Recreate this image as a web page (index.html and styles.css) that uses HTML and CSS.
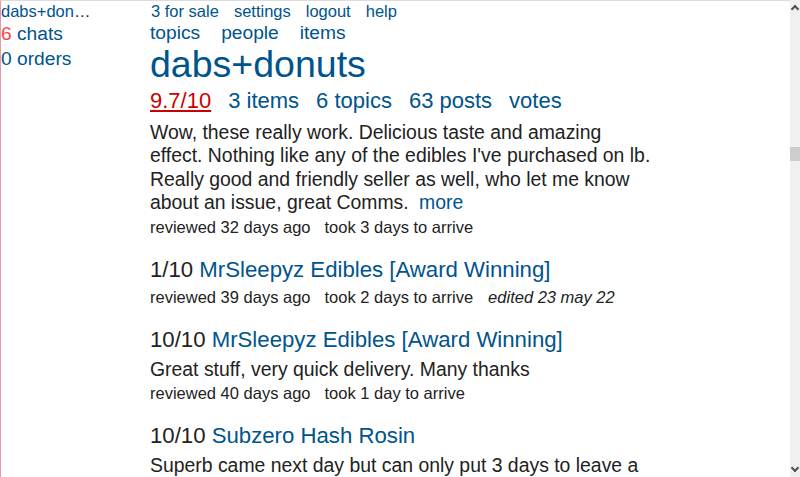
FILE: index.html
```html
<!DOCTYPE html>
<html>
<head>
<meta charset="utf-8">
<link rel="stylesheet" href="styles.css">
</head>
<body>
<div class="page">
  <aside class="side">
    <div class="side-name"><a href="#">dabs+donuts</a></div>
    <div class="side-row"><span class="alert">6</span> <a href="#">chats</a></div>
    <div class="side-row"><a href="#">0 orders</a></div>
  </aside>
  <main class="main">
    <nav class="topnav">
      <a href="#">3 for sale</a>
      <a href="#">settings</a>
      <a href="#">logout</a>
      <a href="#">help</a>
    </nav>
    <nav class="subnav">
      <a href="#">topics</a>
      <a href="#">people</a>
      <a href="#">items</a>
    </nav>
    <h1 class="title">dabs+donuts</h1>
    <div class="stats">
      <a href="#" class="rating">9.7/10</a>
      <a href="#">3 items</a>
      <a href="#">6 topics</a>
      <a href="#">63 posts</a>
      <a href="#">votes</a>
    </div>
    <section class="review first">
      <p class="body">Wow, these really work. Delicious taste and amazing effect. Nothing like any of the edibles I've purchased on lb. Really good and friendly seller as well, who let me know about an issue, great Comms. <a href="#" class="more">more</a></p>
      <div class="meta"><span>reviewed 32 days ago</span><span>took 3 days to arrive</span></div>
    </section>
    <section class="review">
      <div class="rtitle">1/10 <a href="#">MrSleepyz Edibles [Award Winning]</a></div>
      <div class="meta"><span>reviewed 39 days ago</span><span>took 2 days to arrive</span><em>edited 23 may 22</em></div>
    </section>
    <section class="review">
      <div class="rtitle">10/10 <a href="#">MrSleepyz Edibles [Award Winning]</a></div>
      <p class="body">Great stuff, very quick delivery. Many thanks</p>
      <div class="meta"><span>reviewed 40 days ago</span><span>took 1 day to arrive</span></div>
    </section>
    <section class="review">
      <div class="rtitle">10/10 <a href="#">Subzero Hash Rosin</a></div>
      <p class="body">Superb came next day but can only put 3 days to leave a review, so I wanted to let people know it arrived quickly.</p>
    </section>
  </main>
</div>
<div class="scrollbar">
  <div class="sb-up"></div>
  <div class="sb-thumb"></div>
  <div class="sb-down"></div>
</div>
</body>
</html>
```
FILE: styles.css
```css
html, body {
  margin: 0;
  padding: 0;
  height: 100%;
  overflow: hidden;
}
body {
  font-family: "Liberation Sans", Arial, sans-serif;
  color: #222;
  background: #fff;
  border-top: 1px solid #dcdcdc;
  border-left: 1px solid #e896b4;
  box-sizing: border-box;
}
a {
  color: #00548c;
  text-decoration: none;
}
.page {
  display: grid;
  grid-template-columns: 149px 505px;
}
.side-name {
  font-size: 16.5px;
  line-height: 20px;
  width: 89.5px;
  white-space: nowrap;
  overflow: hidden;
  text-overflow: ellipsis;
}
.side-row {
  font-size: 19.2px;
  line-height: 25px;
}
.alert {
  color: #f24b4b;
}
.topnav {
  font-size: 16.5px;
  line-height: 20px;
  display: flex;
  gap: 15px;
  padding-left: 1px;
}
.subnav {
  font-size: 19.2px;
  line-height: 24px;
  display: flex;
  gap: 21px;
}
.title {
  font-size: 37.5px;
  font-weight: normal;
  line-height: 39px;
  margin: 0;
  color: #00548c;
}
.stats {
  font-size: 22px;
  line-height: 34px;
  display: flex;
  gap: 17px;
}
.rating {
  color: #c00;
  text-decoration: underline;
}
.review {
  margin-top: 16px;
}
.review.first {
  margin-top: 3px;
}
.rtitle {
  font-size: 22.2px;
  line-height: 30px;
}
.body {
  font-size: 19.4px;
  line-height: 23.4px;
  margin: 0;
}
.more {
  margin-left: 5px;
}
.rtitle + .body {
  margin-top: 3px;
}
.meta {
  font-size: 16.5px;
  line-height: 24px;
  display: flex;
  gap: 14px;
}
.meta em {
  margin-left: 1px;
}
.scrollbar {
  position: fixed;
  top: 0;
  right: 0;
  width: 10px;
  height: 100%;
  background: #f0f0f0;
}
.sb-thumb {
  position: absolute;
  top: 147px;
  left: 0;
  width: 10px;
  height: 14px;
  background: #cdcdcd;
}
.sb-up, .sb-down {
  position: absolute;
  left: 2px;
  width: 4px;
  height: 4px;
  border-left: 2px solid #505050;
  border-top: 2px solid #505050;
}
.sb-up {
  top: 6px;
  transform: rotate(45deg);
}
.sb-down {
  bottom: 6px;
  transform: rotate(225deg);
}
```
